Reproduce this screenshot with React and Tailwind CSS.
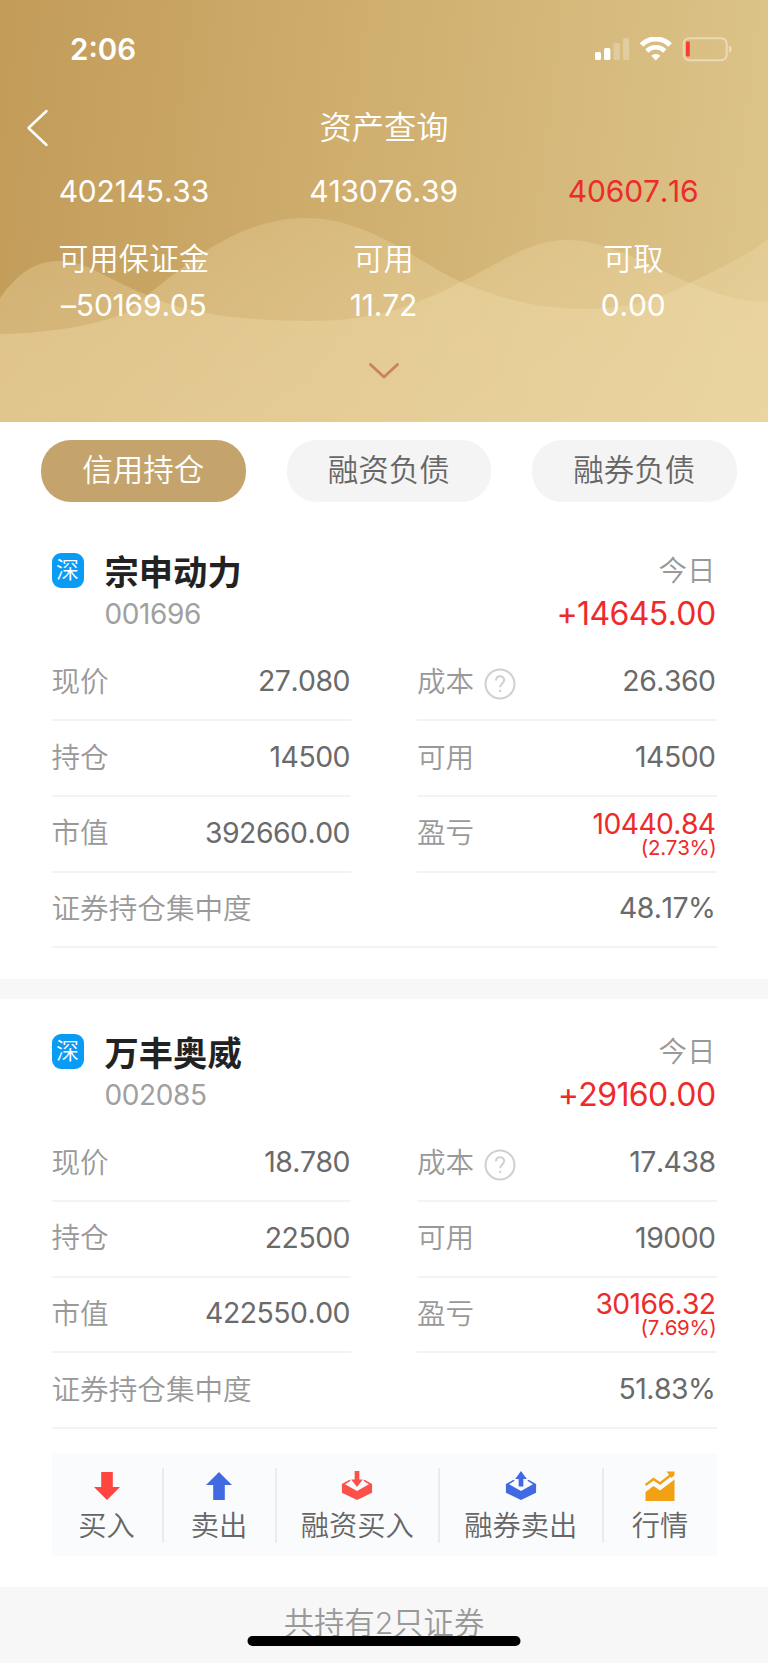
const CJK = "font-['Inter','Noto_Sans_CJK_SC',sans-serif]";

function StatusIcons() {
  return (
    <svg className="mt-px" width="138" height="26" viewBox="0 0 138 26" fill="none">
      <rect x="0" y="15" width="6" height="8" rx="1.6" fill="#fff" />
      <rect x="9" y="11" width="6.4" height="12" rx="1.6" fill="#fff" />
      <rect x="18.5" y="6" width="6.4" height="17" rx="1.6" fill="#fff" fillOpacity=".26" />
      <rect x="28" y="1" width="6.2" height="22" rx="1.6" fill="#fff" fillOpacity=".26" />
      <path d="M46.500 8a20 20 0 0 1 28.600 0" stroke="#fff" strokeWidth="5" />
      <path d="M51.800 14a12.800 12.800 0 0 1 18 0" stroke="#fff" strokeWidth="4.600" />
      <path d="M60.800 23.400l-4.600-4.700a7 7 0 0 1 9.200 0z" fill="#fff" />
      <rect x="88.700" y="1.200" width="43" height="22" rx="5.500" stroke="#fff" strokeOpacity=".42" strokeWidth="2" />
      <path d="M134 8.800c3.600.8 3.600 6 0 6.800z" fill="#fff" fillOpacity=".45" />
      <rect x="91" y="4.500" width="3.800" height="15" rx="1" fill="#ff3b30" />
    </svg>
  );
}

function Waves() {
  return (
    <svg className="absolute inset-0" width="768" height="422" viewBox="0 0 768 422">
      <defs>
        <linearGradient id="wave" x1="0" y1="218" x2="0" y2="422" gradientUnits="userSpaceOnUse">
          <stop offset="0" stopColor="#f3dfae" stopOpacity=".26" />
          <stop offset=".4" stopColor="#f3dfae" stopOpacity=".34" />
          <stop offset="1" stopColor="#f3dfae" stopOpacity=".37" />
        </linearGradient>
      </defs>
      <path fill="url(#wave)" d="M0 298C20 270 38 261 59 261C88 261 108 280 147 295C185 314 245 321 310 321C380 321 420 303 461 282C500 263 530 240 566 240C610 240 650 267 690 283C720 296 745 302 768 302V422H0Z" />
      <path fill="url(#wave)" d="M0 334C55 333 100 324 128 312C138 305 143 299 150 293C190 261 240 218 306 218C370 218 420 264 461 282C500 299 540 309 583 309C630 309 660 299 690 283C720 268 745 257 768 239V422H0Z" />
    </svg>
  );
}

function Stat({ label, value, tone = "" }) {
  return (
    <div className="flex flex-1 flex-col items-center">
      {label && <div className="h-[44px] text-[30.200px] leading-[44px]">{label}</div>}
      <div className={"mt-[3px] h-11 text-[30px] leading-[43px] font-normal tracking-[-0.200px] " + tone}>{value}</div>
    </div>
  );
}

function Row({ label, value, help, sub }) {
  return (
    <div className="flex h-[75.700px] items-center justify-between border-b-2 border-[#f3f3f3] pr-px">
      <div className="flex items-center text-[28.600px] leading-none text-[#999]">
        <span>{label}</span>
        {help && (
          <svg className="mt-[3px] ml-[10px]" width="32" height="32" viewBox="0 0 32 32" fill="none" stroke="#d0d0d0" strokeWidth="2">
            <circle cx="16" cy="16" r="14.500" />
            <path d="M12 12.600c0-5.800 8.200-5.500 8.200-.6 0 3.400-4 3.600-4 7.200" />
            <path d="M16.200 21.700v2.300" />
          </svg>
        )}
      </div>
      {sub ? (
        <div className="-mr-px flex flex-col items-end font-normal text-[#ee2b2b]">
          <span className="pr-px text-[28.300px] leading-[28px] tracking-[-0.6px]">{value}</span>
          <span className="text-[20.500px] leading-[20px] tracking-[-0.3px]">{sub}</span>
        </div>
      ) : (
        <span className="mb-0.5 text-[28.400px] leading-none font-normal tracking-[-0.5px] text-[#6a6a6a]">{value}</span>
      )}
    </div>
  );
}

function Holding({ s }) {
  return (
    <section className="bg-white px-[51.500px]">
      <div className="flex justify-between">
        <div className="flex">
          <div className="flex h-[35px] w-8 items-center justify-center rounded-[9px] bg-[#0a9bf5] text-[23px] text-white">深</div>
          <div className="ml-[21px]">
            <div className="h-[38px] text-[34.300px] leading-[40px] font-bold text-[#222]">{s.name}</div>
            <div className="mt-[3px] h-[38px] text-[28px] leading-[40px] font-normal tracking-[-0.4px] text-[#a0a0a0]">{s.code}</div>
          </div>
        </div>
        <div className="flex flex-col items-end pr-px">
          <div className="h-[36px] text-[28.500px] leading-[36px] text-[#999]">今日</div>
          <div className="mt-[4px] h-[40px] text-[32px] leading-[42px] font-normal tracking-[-0.6px] text-[#ee2b2b]">{s.today}</div>
        </div>
      </div>
      <div className="mt-[12.500px] grid grid-cols-2 gap-x-[66px]">
        <Row label="现价" value={s.price} />
        <Row label="成本" value={s.cost} help />
        <Row label="持仓" value={s.qty} />
        <Row label="可用" value={s.avail} />
        <Row label="市值" value={s.market} />
        <Row label="盈亏" value={s.pl} sub={s.pct} />
        <div className="col-span-2">
          <Row label="证券持仓集中度" value={s.conc} />
        </div>
      </div>
    </section>
  );
}

const holdings = [
  { name: "宗申动力", code: "001696", today: "+14645.00", price: "27.080", cost: "26.360", qty: "14500", avail: "14500", market: "392660.00", pl: "10440.84", pct: "(2.73%)", conc: "48.17%" },
  { name: "万丰奥威", code: "002085", today: "+29160.00", price: "18.780", cost: "17.438", qty: "22500", avail: "19000", market: "422550.00", pl: "30166.32", pct: "(7.69%)", conc: "51.83%" },
];

function Tray({ up }) {
  return (
    <svg width="32" height="31" viewBox="0 0 34 32" fill={up ? "#4169e1" : "#fc5048"}>
      <path d="M1 14.500l16 8.200 16-8.200v9.200L17 31.500 1 23.700z" />
      <path d="M1 14.500l8-4.500 1.300 1-6 3.800 12.700 7 12.700-7-6-3.800 1.300-1 8 4.500v2L17 24.500 1 16.500z" />
      <path d={up ? "M17 .5l6.200 8.500h-3.700V17h-5V9h-3.700z" : "M14.500.5h5v9h3.700L17 17.500l-6.200-8h3.700z"} />
    </svg>
  );
}

const actions = [
  { label: "买入", w: "w-[112px]", icon: <svg width="26" height="30" viewBox="0 0 26 30"><path fill="#ff453f" d="M7.200 1h11.600v15H26L13 29 0 16h7.200z" /></svg> },
  { label: "卖出", w: "w-[113px]", icon: <svg width="26" height="30" viewBox="0 0 26 30"><path fill="#4169e1" d="M7.200 29h11.600V14H26L13 1 0 14h7.200z" /></svg> },
  { label: "融资买入", w: "w-[163.500px]", icon: <Tray /> },
  { label: "融券卖出", w: "w-[163.500px]", icon: <Tray up /> },
  {
    label: "行情",
    w: "w-[113px]",
    icon: (
      <svg width="30" height="32" viewBox="0 0 30 32">
        <path fill="#f2a014" d="M.5 31V22l8-6 6.500 4.500L29.500 9.500V31z" />
        <path fill="none" stroke="#f2a014" strokeWidth="2.400" d="M.5 15l8-6 6.500 4.500L26.500 4.500" />
        <path fill="#f2a014" d="M21.500 1.500h8V5l-3 3z" />
      </svg>
    ),
  },
];

export default function App() {
  return (
    <div className={"flex h-[1663px] w-[768px] flex-col overflow-hidden bg-white font-[350] [font-kerning:none] " + CJK}>
      <header className="relative h-[422px] bg-[linear-gradient(97deg,#c29b58_0%,#cfae6e_45%,#ddc58b_100%)] text-white">
        <Waves />
        <div className="relative flex h-full flex-col">
          <div className="flex h-[98px] items-center justify-between pr-[35px] pl-[70px]">
            <span className="text-[29.500px] font-semibold">2:06</span>
            <StatusIcons />
          </div>
          <div className="grid h-[58px] grid-cols-3 items-center">
            <svg className="mt-0.5 ml-[26px]" width="24" height="38" viewBox="0 0 24 38" fill="none" stroke="#fff" strokeWidth="2.500" strokeLinecap="round" strokeLinejoin="round">
              <path d="M20.500 2L2.500 19l18 17" />
            </svg>
            <h1 className="mt-0.5 text-center text-[32.300px] leading-[40px]">资产查询</h1>
          </div>
          <div className="mt-[11px] flex pr-[10px] pl-[9px]">
            <Stat value="402145.33" />
            <Stat value="413076.39" />
            <Stat value="40607.16" tone="text-[#ee2b2b]" />
          </div>
          <div className="mt-[23px] flex pr-[10px] pl-[9px]">
            <Stat label="可用保证金" value="–50169.05" />
            <Stat label="可用" value="11.72" />
            <Stat label="可取" value="0.00" />
          </div>
          <svg className="mt-[34px] self-center" width="32" height="18" viewBox="0 0 32 18" fill="none" stroke="#c98459" strokeWidth="3" strokeLinecap="round" strokeLinejoin="round">
            <path d="M2.500 2.500L16 15 29.500 2.500" />
          </svg>
        </div>
      </header>
      <nav className="flex h-[131px] shrink-0 gap-[41px] pt-[18px] pl-[41px] text-[30.500px] text-[#666]">
        <div className="flex h-[62px] w-[204.500px] items-center justify-center rounded-[30px] bg-[#c4a46c] pb-0.5 text-white">信用持仓</div>
        <div className="flex h-[62px] w-[204.500px] items-center justify-center rounded-[30px] bg-[#f4f4f4] pb-0.5">融资负债</div>
        <div className="flex h-[62px] w-[204.500px] items-center justify-center rounded-[30px] bg-[#f4f4f4] pb-0.5">融券负债</div>
      </nav>
      <Holding s={holdings[0]} />
      <div className="mt-[30.500px] mb-[35px] h-5 shrink-0 bg-[#f7f7f7]" />
      <Holding s={holdings[1]} />
      <div className="mx-[51.500px] mt-[25.300px] flex h-[102px] shrink-0 items-center bg-[#fafbfd] text-[28.300px] text-[#666]">
        {actions.map((a, i) => (
          <div key={a.label} className={"flex h-[75px] shrink-0 flex-col items-center border-[#ebebed] " + a.w + (i < 4 ? " border-r-2" : "")}>
            <div className="mt-[2px] flex h-8 shrink-0 items-center">{a.icon}</div>
            <div className="mt-[4px] h-9 shrink-0 leading-[40px]">{a.label}</div>
          </div>
        ))}
      </div>
      <footer className="mt-[31px] flex flex-1 flex-col items-center bg-[#f7f7f7] pt-[14px]">
        <div className="relative text-[30.300px] leading-[44px] text-[#999]">
          共持有2只证券
          <div className="absolute top-[35px] left-1/2 h-[10px] w-[273px] -translate-x-1/2 rounded-full bg-black" />
        </div>
      </footer>
    </div>
  );
}
